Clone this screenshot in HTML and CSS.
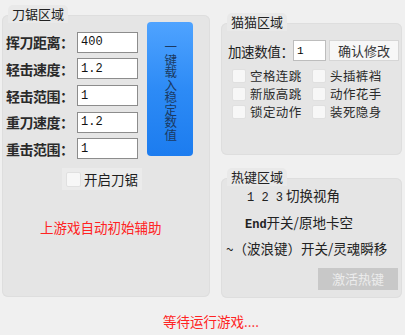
FILE: index.html
```html
<!DOCTYPE html>
<html>
<head>
    <link rel="stylesheet" href="styles.css">
</head>
<body>
    <div class="window">
        <div class="main">
            <div class="group saw">
                <div class="group-title">刀锯区域</div>
                <div class="saw-top">
                    <div class="fields">
                        <div class="field"><label>挥刀距离：</label><input type="text" value="400"></div>
                        <div class="field"><label>轻击速度：</label><input type="text" value="1.2"></div>
                        <div class="field"><label>轻击范围：</label><input type="text" value="1"></div>
                        <div class="field"><label>重刀速度：</label><input type="text" value="1.2"></div>
                        <div class="field"><label>重击范围：</label><input type="text" value="1"></div>
                    </div>
                    <button class="load-btn">一键载入稳定数值</button>
                </div>
                <div class="saw-check">
                    <span class="box"></span><span>开启刀锯</span>
                </div>
                <p class="hint">上游戏自动初始辅助</p>
            </div>

            <div class="side">
                <div class="group cat">
                    <div class="group-title">猫猫区域</div>
                    <div class="speed-row">
                        <label>加速数值：</label>
                        <input type="text" value="1">
                        <button class="plain-btn">确认修改</button>
                    </div>
                    <div class="options">
                        <div class="option"><span class="box"></span>空格连跳</div>
                        <div class="option"><span class="box"></span>头插裤裆</div>
                        <div class="option"><span class="box"></span>新版高跳</div>
                        <div class="option"><span class="box"></span>动作花手</div>
                        <div class="option"><span class="box"></span>锁定动作</div>
                        <div class="option"><span class="box"></span>装死隐身</div>
                    </div>
                </div>

                <div class="group hotkeys">
                    <div class="group-title">热键区域</div>
                    <p class="key-line first"><span class="ascii">1 2 3</span> 切换视角</p>
                    <p class="key-line second"><span class="ascii bold">End</span>开关/原地卡空</p>
                    <p class="key-line third">~（波浪键）开关/灵魂瞬移</p>
                    <div class="hot-actions">
                        <button class="disabled-btn">激活热键</button>
                    </div>
                </div>
            </div>
        </div>
        <p class="status">等待运行游戏....</p>
    </div>
</body>
</html>
```

FILE: styles.css
```css
* {
    margin: 0;
    padding: 0;
    box-sizing: border-box;
    font-family: "Noto Sans CJK SC", "Noto Sans", sans-serif;
}

body {
    background: #f0f0f0;
    color: #1e1e1e;
    font-size: 13px;
}

.window {
    width: 405px;
    height: 335px;
}

.main {
    display: flex;
    padding-left: 2px;
    gap: 11px;
}

.group {
    position: relative;
    background: #e5e5e5;
    border-radius: 6px;
    box-shadow: inset 0 0 0 1px #dedede;
}

.group-title {
    position: absolute;
    top: -10px;
    left: 6px;
    height: 18px;
    line-height: 18px;
    padding: 0 4px;
    background: #e9e9e9;
    border-radius: 5px 5px 0 0;
    color: #222;
}

/* left: saw */
.saw {
    width: 208px;
    height: 282px;
    margin-top: 15px;
    padding: 7px 0 0 4px;
}

.saw-top {
    display: flex;
    gap: 9px;
}

.fields {
    display: flex;
    flex-direction: column;
    gap: 5.7px;
    margin-top: 9.7px;
}

.field {
    display: flex;
    align-items: center;
    height: 21px;
}

.field label {
    width: 71px;
    font-size: 14px;
    font-weight: bold;
    color: #2a2a2a;
    letter-spacing: -0.5px;
    white-space: nowrap;
}

.field input {
    width: 61px;
    height: 21px;
    border: 1px solid #8c8c8c;
    background: #fff;
    padding-left: 3px;
    font-family: "Liberation Mono", monospace;
    font-size: 12px;
    color: #111;
}

.load-btn {
    width: 46px;
    height: 134px;
    border: none;
    border-radius: 4px;
    background: linear-gradient(180deg, #4fa3ff 0%, #2d8bf6 50%, #1c7cef 100%);
    writing-mode: vertical-rl;
    text-orientation: upright;
    font-size: 12.5px;
    line-height: 1;
    color: #1b3a63;
    padding-top: 4px;
}

.saw-check {
    display: flex;
    align-items: center;
    gap: 3px;
    width: 80px;
    height: 22px;
    margin: 9px 0 0 56px;
    padding-left: 4px;
    background: #ebebeb;
    font-size: 13.5px;
}

.box {
    display: inline-block;
    flex-shrink: 0;
    width: 15px;
    height: 15px;
    background: #f7f7f7;
    border: 1px solid #e0e0e0;
    border-radius: 2px;
}

.hint {
    margin: 27px 0 0 34px;
    color: #ff2323;
    font-size: 13.5px;
}

/* right side */
.side {
    display: flex;
    flex-direction: column;
    width: 181px;
}

.cat {
    height: 132px;
    margin-top: 23px;
    padding: 17px 0 0 7px;
}

.speed-row {
    display: flex;
    align-items: center;
    height: 21px;
}

.speed-row label {
    width: 65px;
    font-size: 13.5px;
    letter-spacing: -0.4px;
    white-space: nowrap;
}

.speed-row input {
    width: 33px;
    height: 21px;
    border: 1px solid #bdbdbd;
    background: #fff;
    padding-left: 3px;
    font-family: "Liberation Mono", monospace;
    font-size: 11px;
}

.plain-btn {
    width: 70px;
    height: 21px;
    margin-left: 3px;
    border: 1px solid #d6d6d6;
    background: #f7f7f7;
    font-size: 13px;
    line-height: 19px;
    color: #333;
}

.options {
    display: grid;
    grid-template-columns: 80px 80px;
    margin: 6px 0 0 4px;
}

.option {
    display: flex;
    align-items: center;
    gap: 3px;
    height: 18.2px;
    line-height: 18.2px;
    font-size: 12.5px;
    letter-spacing: 0.4px;
    color: #2a2a2a;
    white-space: nowrap;
}

.option .box {
    width: 14px;
    height: 14px;
    margin-right: 1px;
}

.hotkeys {
    height: 120px;
    margin-top: 23px;
    padding-top: 8px;
}

.key-line {
    height: 26.5px;
    line-height: 18px;
    font-size: 13.5px;
    color: #222;
    white-space: nowrap;
}

.key-line.first { padding-left: 26px; }
.key-line.second { padding-left: 24px; }
.key-line.third { padding-left: 5px; }

.ascii {
    font-family: "Liberation Mono", monospace;
    font-size: 12px;
}

.bold {
    font-weight: bold;
}

.hot-actions {
    display: flex;
    justify-content: flex-end;
    padding-right: 4px;
    margin-top: 2px;
}

.disabled-btn {
    width: 80px;
    height: 22px;
    border: none;
    background: #c8c8c8;
    color: #ececec;
    font-size: 13px;
}

.status {
    margin-top: 13px;
    padding-left: 163px;
    color: #ff2323;
    font-size: 13.5px;
}
```
